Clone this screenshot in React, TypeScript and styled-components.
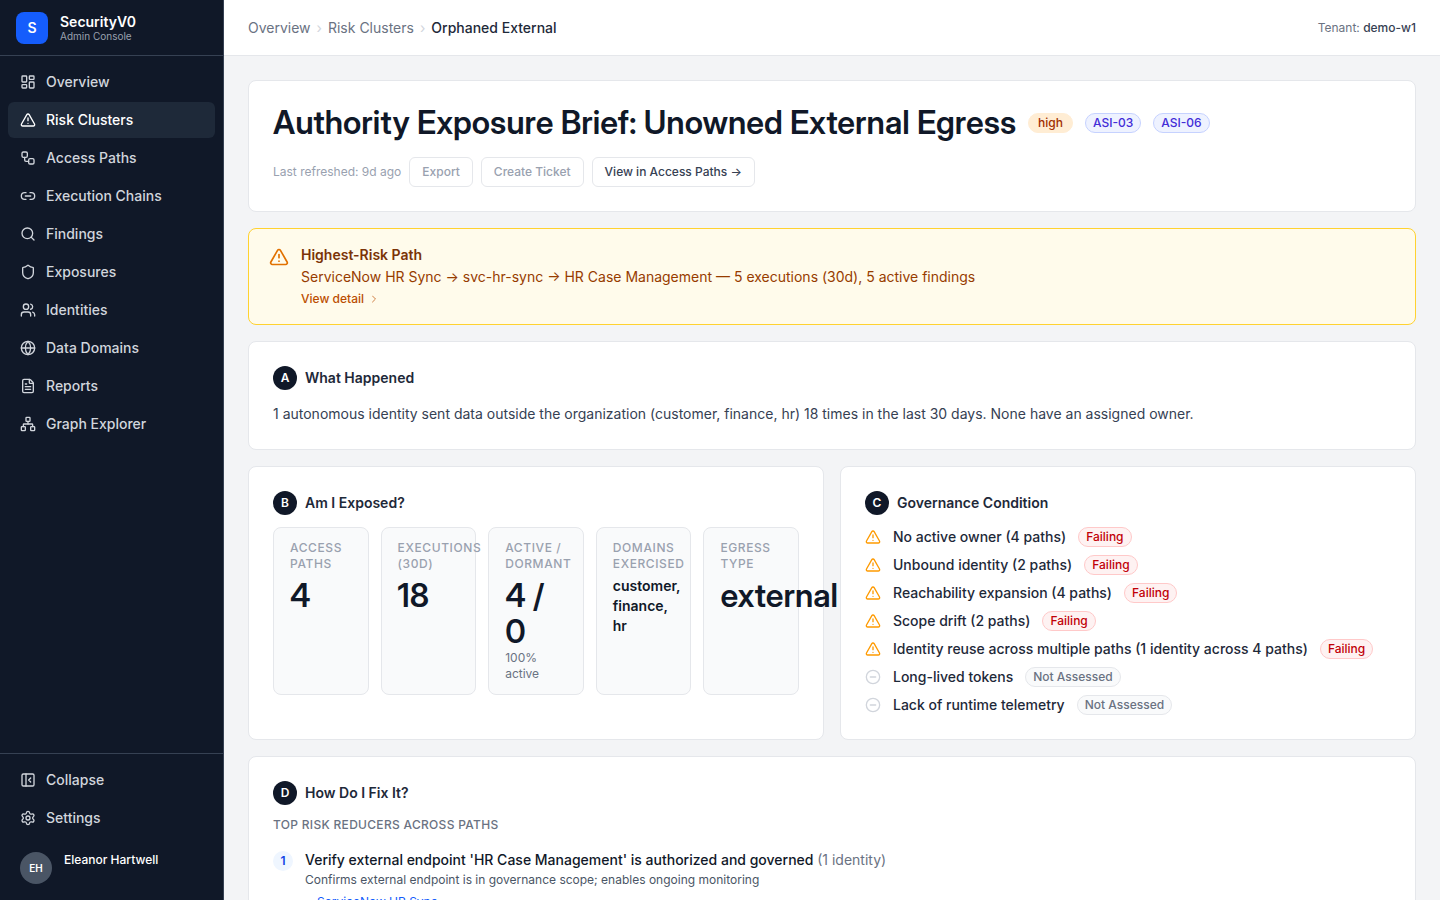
import React from "react";
import styled, { createGlobalStyle, css } from "styled-components";
import {
  ChevronRight,
  CircleMinus,
  FileText,
  Globe,
  LayoutDashboard,
  Link2,
  Network,
  PanelLeftClose,
  Search,
  Settings,
  Shield,
  TriangleAlert,
  Users,
  Workflow,
} from "lucide-react";

const c = {
  gray50: "#f9fafb",
  gray100: "#f3f4f6",
  gray200: "#e5e7eb",
  gray300: "#d1d5dc",
  gray400: "#99a1af",
  gray500: "#6a7282",
  gray600: "#4a5565",
  gray700: "#364153",
  gray800: "#1e2939",
  gray900: "#101828",
  blue50: "#eff6ff",
  blue600: "#155dfc",
  blue700: "#1447e6",
};

const displayFont = `"Inter Display", Inter, "Liberation Sans", sans-serif`;

const GlobalStyle = createGlobalStyle`
  *, *::before, *::after { box-sizing: border-box; }
  body {
    margin: 0;
    font-family: Inter, "Liberation Sans", sans-serif;
    font-size: 14px;
    line-height: 20px;
    -webkit-font-smoothing: antialiased;
    color: ${c.gray900};
    background: ${c.gray100};
  }
  h1, h2, h3, p, ul, ol, dl, dd { margin: 0; padding: 0; }
  ul, ol { list-style: none; }
  a { color: inherit; text-decoration: none; }
  button { font: inherit; cursor: pointer; }
  svg { flex-shrink: 0; }
`;

const Shell = styled.div`
  display: flex;
  height: 100vh;
  overflow: hidden;
`;

const Sidebar = styled.aside`
  display: flex;
  flex-direction: column;
  flex: 0 0 224px;
  background: ${c.gray900};
  border-right: 1px solid ${c.gray700};
`;

const Brand = styled.div`
  display: flex;
  align-items: center;
  gap: 12px;
  height: 56px;
  padding: 0 16px;
  border-bottom: 1px solid ${c.gray700};
`;

const BrandMark = styled.div`
  display: grid;
  place-items: center;
  width: 32px;
  height: 32px;
  border-radius: 8px;
  background: ${c.blue600};
  color: #fff;
  font-weight: 600;
`;

const BrandName = styled.div`
  color: #fff;
  font-weight: 600;
  line-height: 16px;
`;

const BrandSub = styled.div`
  color: ${c.gray400};
  font-size: 10px;
  line-height: 12px;
`;

const Nav = styled.nav`
  flex: 1;
  padding: 8px;
`;

const NavList = styled.ul`
  display: flex;
  flex-direction: column;
  gap: 2px;
`;

const navItem = css<{ $active?: boolean }>`
  display: flex;
  align-items: center;
  gap: 10px;
  width: 100%;
  padding: 8px 12px;
  border: 0;
  border-radius: 6px;
  background: ${(p) => (p.$active ? c.gray800 : "transparent")};
  color: ${(p) => (p.$active ? "#fff" : c.gray300)};
  font-weight: 500;
  text-align: left;
`;

const NavLink = styled.a<{ $active?: boolean }>`
  ${navItem}
`;

const NavButton = styled.button`
  ${navItem}
`;

const SidebarFooter = styled.div`
  padding: 8px;
  border-top: 1px solid ${c.gray700};
`;

const UserRow = styled.div`
  display: flex;
  gap: 12px;
  margin-top: 8px;
  padding: 8px 12px;
  color: #fff;
  font-size: 12px;
  font-weight: 500;
  line-height: 16px;
`;

const Avatar = styled.div`
  display: grid;
  place-items: center;
  width: 32px;
  height: 32px;
  border-radius: 50%;
  background: ${c.gray600};
  font-size: 10px;
  font-weight: 600;
`;

const Content = styled.div`
  display: flex;
  flex: 1;
  flex-direction: column;
  min-width: 0;
`;

const TopBar = styled.header`
  display: flex;
  flex: 0 0 56px;
  align-items: center;
  justify-content: space-between;
  padding: 0 24px;
  background: #fff;
  border-bottom: 1px solid ${c.gray200};
`;

const Crumbs = styled.nav`
  display: flex;
  align-items: center;
  gap: 6px;
  color: ${c.gray500};
`;

const CrumbSeparator = styled.span`
  color: ${c.gray300};
`;

const CrumbCurrent = styled.span`
  color: ${c.gray800};
  font-weight: 500;
`;

const Tenant = styled.div`
  color: ${c.gray500};
  font-size: 12px;

  strong {
    color: ${c.gray700};
    font-weight: 500;
  }
`;

const Main = styled.main`
  display: flex;
  flex: 1;
  flex-direction: column;
  gap: 16px;
  padding: 24px;
  overflow-y: auto;
  scrollbar-width: none;

  > * { flex-shrink: 0; }
`;

const Card = styled.section`
  padding: 24px;
  background: #fff;
  border: 1px solid ${c.gray200};
  border-radius: 8px;
`;

const TitleRow = styled.div`
  display: flex;
  flex-wrap: wrap;
  align-items: center;
  gap: 12px;
`;

const Title = styled.h1`
  font-family: ${displayFont};
  font-size: 32px;
  font-weight: 600;
  line-height: 36px;
`;

const ActionRow = styled.div`
  display: flex;
  align-items: center;
  gap: 8px;
  margin-top: 16px;
  color: ${c.gray400};
  font-size: 12px;
  line-height: 16px;
`;

const action = css`
  padding: 6px 12px;
  background: #fff;
  border: 1px solid ${c.gray200};
  border-radius: 6px;
  font-weight: 500;
`;

const ActionButton = styled.button`
  ${action}
  color: ${c.gray400};
`;

const ActionLink = styled.a`
  ${action}
  color: ${c.gray700};
`;

const tones = {
  high: { bg: "#ffedd4", border: "#ffedd4", text: "#9f2d00" },
  tag: { bg: "#eef2ff", border: "#c6d2ff", text: "#432dd7" },
  failing: { bg: "#fef2f2", border: "#ffc9c9", text: "#c10007" },
  muted: { bg: c.gray50, border: c.gray200, text: c.gray500 },
};

const Badge = styled.span<{ $tone: keyof typeof tones }>`
  padding: 1px ${(p) => (p.$tone === "high" ? 9 : 7)}px;
  border: 1px solid ${(p) => tones[p.$tone].border};
  border-radius: 10px;
  background: ${(p) => tones[p.$tone].bg};
  color: ${(p) => tones[p.$tone].text};
  font-size: 12px;
  font-weight: 500;
  line-height: 16px;
  white-space: nowrap;
`;

const Alert = styled.section`
  display: flex;
  gap: 12px;
  padding: 16px 20px 17px;
  background: #fffbeb;
  border: 1px solid #ffd230;
  border-radius: 8px;
  color: #973c00;

  > svg {
    margin-top: 2px;
    color: #e17100;
  }
`;

const AlertTitle = styled.h2`
  color: #7b3306;
  font-size: 14px;
  font-weight: 600;
`;

const AlertText = styled.p`
  margin-top: 2px;
`;

const AlertLink = styled.a`
  display: flex;
  align-items: center;
  gap: 4px;
  width: fit-content;
  margin-top: 4px;
  color: #bb4d00;
  font-size: 12px;
  font-weight: 500;
  line-height: 16px;

  svg { opacity: 0.7; }
`;

const SectionHead = styled.div`
  display: flex;
  align-items: center;
  gap: 8px;
  margin-bottom: 12px;

  h2 {
    color: ${c.gray800};
    font-size: 14px;
    font-weight: 600;
  }
`;

const Letter = styled.span`
  display: grid;
  place-items: center;
  width: 24px;
  height: 24px;
  border-radius: 50%;
  background: ${c.gray900};
  color: #fff;
  font-size: 12px;
  font-weight: 600;
  line-height: 16px;
`;

const Summary = styled.p`
  color: ${c.gray700};
  line-height: 23px;
`;

const Columns = styled.div`
  display: grid;
  grid-template-columns: repeat(2, minmax(0, 1fr));
  gap: 16px;
`;

const Stats = styled.dl`
  display: grid;
  grid-template-columns: repeat(5, minmax(0, 1fr));
  gap: 12px;
  margin: 0;
`;

const Stat = styled.div`
  padding: 12px 16px;
  background: ${c.gray50};
  border: 1px solid ${c.gray200};
  border-radius: 8px;
`;

const StatLabel = styled.dt`
  color: ${c.gray400};
  font-size: 12px;
  font-weight: 500;
  line-height: 16px;
  letter-spacing: 0.05em;
  text-transform: uppercase;
`;

const StatValue = styled.dd<{ $small?: boolean }>`
  margin-top: ${(p) => (p.$small ? 4 : 6)}px;
  font-family: ${(p) => (p.$small ? "inherit" : displayFont)};
  font-size: ${(p) => (p.$small ? 14 : 32)}px;
  font-weight: 600;
  line-height: ${(p) => (p.$small ? 20 : 36)}px;
`;

const StatNote = styled.dd`
  color: ${c.gray500};
  font-size: 12px;
  line-height: 16px;
`;

const Conditions = styled.ul`
  display: flex;
  flex-direction: column;
  gap: 8px;
`;

const Condition = styled.li<{ $failing: boolean }>`
  display: flex;
  align-items: center;
  gap: 12px;
  color: ${c.gray800};
  font-weight: 500;

  svg { color: ${(p) => (p.$failing ? "#fe9a00" : c.gray300)}; }
`;

const Overline = styled.h3`
  color: ${c.gray500};
  font-size: 12px;
  font-weight: 500;
  line-height: 16px;
  letter-spacing: 0.025em;
  text-transform: uppercase;
`;

const Fixes = styled.ol`
  margin-top: 16px;
`;

const Fix = styled.li`
  display: flex;
  gap: 12px;
  align-items: flex-start;
`;

const FixNumber = styled.span`
  display: grid;
  place-items: center;
  width: 20px;
  height: 20px;
  margin-top: 2px;
  border-radius: 50%;
  background: ${c.blue50};
  color: ${c.blue700};
  font-size: 12px;
  font-weight: 600;
`;

const FixTitle = styled.p`
  font-weight: 500;
  line-height: 22px;

  span {
    color: ${c.gray500};
    font-weight: 400;
  }
`;

const FixText = styled.p`
  margin-top: 1px;
  color: ${c.gray600};
  font-size: 12px;
  line-height: 16px;
`;

const FixLink = styled.a`
  display: block;
  margin-top: 4px;
  padding-left: 12px;
  color: ${c.blue600};
  font-size: 12px;
  line-height: 20px;
`;

const navItems = [
  { label: "Overview", Icon: LayoutDashboard },
  { label: "Risk Clusters", Icon: TriangleAlert, active: true },
  { label: "Access Paths", Icon: Workflow },
  { label: "Execution Chains", Icon: Link2 },
  { label: "Findings", Icon: Search },
  { label: "Exposures", Icon: Shield },
  { label: "Identities", Icon: Users },
  { label: "Data Domains", Icon: Globe },
  { label: "Reports", Icon: FileText },
  { label: "Graph Explorer", Icon: Network },
];

const stats = [
  { label: "Access Paths", value: "4" },
  { label: "Executions (30d)", value: "18" },
  { label: "Active / Dormant", value: "4 / 0", note: "100% active" },
  { label: "Domains Exercised", value: "customer, finance, hr", small: true },
  { label: "Egress Type", value: "external" },
];

const conditions = [
  { text: "No active owner (4 paths)", failing: true },
  { text: "Unbound identity (2 paths)", failing: true },
  { text: "Reachability expansion (4 paths)", failing: true },
  { text: "Scope drift (2 paths)", failing: true },
  { text: "Identity reuse across multiple paths (1 identity across 4 paths)", failing: true },
  { text: "Long-lived tokens", failing: false },
  { text: "Lack of runtime telemetry", failing: false },
];

function SectionTitle({ letter, children }: { letter: string; children: React.ReactNode }) {
  return (
    <SectionHead>
      <Letter>{letter}</Letter>
      <h2>{children}</h2>
    </SectionHead>
  );
}

export default function App() {
  return (
    <>
      <GlobalStyle />
      <Shell>
        <Sidebar>
          <Brand>
            <BrandMark>S</BrandMark>
            <div>
              <BrandName>SecurityV0</BrandName>
              <BrandSub>Admin Console</BrandSub>
            </div>
          </Brand>
          <Nav aria-label="Main">
            <NavList>
              {navItems.map(({ label, Icon, active }) => (
                <li key={label}>
                  <NavLink href="#" $active={active} aria-current={active ? "page" : undefined}>
                    <Icon size={16} />
                    {label}
                  </NavLink>
                </li>
              ))}
            </NavList>
          </Nav>
          <SidebarFooter>
            <NavList>
              <li>
                <NavButton type="button">
                  <PanelLeftClose size={16} />
                  Collapse
                </NavButton>
              </li>
              <li>
                <NavLink href="#">
                  <Settings size={16} />
                  Settings
                </NavLink>
              </li>
            </NavList>
            <UserRow>
              <Avatar>EH</Avatar>
              <span>Eleanor Hartwell</span>
            </UserRow>
          </SidebarFooter>
        </Sidebar>

        <Content>
          <TopBar>
            <Crumbs aria-label="Breadcrumb">
              <a href="#">Overview</a>
              <CrumbSeparator>›</CrumbSeparator>
              <a href="#">Risk Clusters</a>
              <CrumbSeparator>›</CrumbSeparator>
              <CrumbCurrent>Orphaned External</CrumbCurrent>
            </Crumbs>
            <Tenant>
              Tenant: <strong>demo-w1</strong>
            </Tenant>
          </TopBar>

          <Main>
            <Card>
              <TitleRow>
                <Title>Authority Exposure Brief: Unowned External Egress</Title>
                <Badge $tone="high">high</Badge>
                <Badge $tone="tag">ASI-03</Badge>
                <Badge $tone="tag">ASI-06</Badge>
              </TitleRow>
              <ActionRow>
                <span>Last refreshed: 9d ago</span>
                <ActionButton type="button">Export</ActionButton>
                <ActionButton type="button">Create Ticket</ActionButton>
                <ActionLink href="#">View in Access Paths →</ActionLink>
              </ActionRow>
            </Card>

            <Alert>
              <TriangleAlert size={20} />
              <div>
                <AlertTitle>Highest-Risk Path</AlertTitle>
                <AlertText>
                  ServiceNow HR Sync → svc-hr-sync → HR Case Management — 5 executions (30d), 5 active findings
                </AlertText>
                <AlertLink href="#">
                  View detail
                  <ChevronRight size={12} />
                </AlertLink>
              </div>
            </Alert>

            <Card>
              <SectionTitle letter="A">What Happened</SectionTitle>
              <Summary>
                1 autonomous identity sent data outside the organization (customer, finance, hr) 18 times in the last
                30 days. None have an assigned owner.
              </Summary>
            </Card>

            <Columns>
              <Card>
                <SectionTitle letter="B">Am I Exposed?</SectionTitle>
                <Stats>
                  {stats.map((s) => (
                    <Stat key={s.label}>
                      <StatLabel>{s.label}</StatLabel>
                      <StatValue $small={s.small}>{s.value}</StatValue>
                      {s.note && <StatNote>{s.note}</StatNote>}
                    </Stat>
                  ))}
                </Stats>
              </Card>
              <Card>
                <SectionTitle letter="C">Governance Condition</SectionTitle>
                <Conditions>
                  {conditions.map(({ text, failing }) => (
                    <Condition key={text} $failing={failing}>
                      {failing ? <TriangleAlert size={16} /> : <CircleMinus size={16} />}
                      {text}
                      <Badge $tone={failing ? "failing" : "muted"}>{failing ? "Failing" : "Not Assessed"}</Badge>
                    </Condition>
                  ))}
                </Conditions>
              </Card>
            </Columns>

            <Card>
              <SectionTitle letter="D">How Do I Fix It?</SectionTitle>
              <Overline>Top risk reducers across paths</Overline>
              <Fixes>
                <Fix>
                  <FixNumber>1</FixNumber>
                  <div>
                    <FixTitle>
                      Verify external endpoint 'HR Case Management' is authorized and governed{" "}
                      <span>(1 identity)</span>
                    </FixTitle>
                    <FixText>Confirms external endpoint is in governance scope; enables ongoing monitoring</FixText>
                    <FixLink href="#">ServiceNow HR Sync</FixLink>
                  </div>
                </Fix>
              </Fixes>
            </Card>
          </Main>
        </Content>
      </Shell>
    </>
  );
}
